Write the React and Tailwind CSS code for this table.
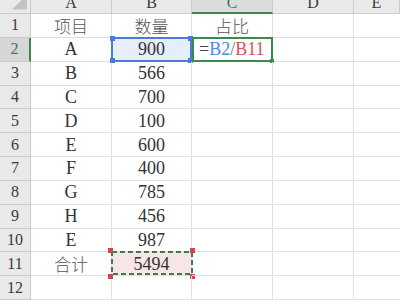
import React from "react";

const serif = "font-['Liberation_Serif','Noto_Sans_CJK_SC',serif]";

const rows = [
  ["项目", "数量", "占比"],
  ["A", "900", "F"],
  ["B", "566", ""],
  ["C", "700", ""],
  ["D", "100", ""],
  ["E", "600", ""],
  ["F", "400", ""],
  ["G", "785", ""],
  ["H", "456", ""],
  ["E", "987", ""],
  ["合计", "5494", ""],
  ["", "", ""],
];

const cols = ["A", "B", "C", "D", "E"];

function isCJK(s) {
  return /[\u4e00-\u9fff]/.test(s);
}

function CellText({ text }) {
  if (!text) return null;
  if (isCJK(text)) {
    return (
      <span className="font-['Noto_Sans_CJK_SC',sans-serif] font-light text-[17px] leading-none text-[#555]">
        {text}
      </span>
    );
  }
  return <span className={`${serif} text-[18px] leading-none text-[#333]`}>{text}</span>;
}

function Handle({ pos, color }) {
  const map = {
    tl: "-left-[3px] -top-[3px]",
    tr: "-right-[3px] -top-[3px]",
    bl: "-left-[3px] -bottom-[3px]",
    br: "-right-[3px] -bottom-[3px]",
  };
  return <div className={`absolute w-[5px] h-[5px] ${map[pos]} ${color}`} />;
}

export default function App() {
  return (
    <div className="w-[400px] h-[300px] overflow-hidden bg-white">
      <div className="grid grid-cols-[31px_81px_80px_81px_81px_1fr] grid-rows-[14px_repeat(12,23.85px)] w-[400px]">
        {/* corner */}
        <div className="relative bg-[#e9e9e9] border-r border-b border-[#cbcbcb] overflow-hidden">
          <svg width="31" height="14" className="absolute left-0 top-0">
            <polygon points="12,9.5 27,9.5 27,-5" fill="#c3c3c3" />
          </svg>
        </div>
        {cols.map((c) => (
          <div
            key={c}
            className={`relative flex justify-center overflow-hidden border-r border-[#cbcbcb] ${
              c === "C" ? "bg-[#dcdcdc] border-b-2 border-b-[#3a8a4e]" : "bg-[#e9e9e9] border-b"
            }`}
          >
            <span
              className={`${serif} text-[16px] leading-none -mt-[5px] ${
                c === "C" ? "text-[#3d7a52]" : "text-[#3a3a3a]"
              }`}
            >
              {c}
            </span>
          </div>
        ))}
        {rows.map((r, i) => {
          const n = i + 1;
          return (
            <React.Fragment key={n}>
              <div
                className={`flex items-center justify-center border-b border-[#cbcbcb] ${
                  n === 2
                    ? "bg-[#d6d6d6] border-r-2 border-r-[#3a8a4e]"
                    : "bg-[#e9e9e9] border-r"
                }`}
              >
                <span
                  className={`${serif} text-[16px] leading-none ${
                    n === 2 ? "text-[#3d7a52]" : "text-[#3a3a3a]"
                  }`}
                >
                  {n}
                </span>
              </div>
              {/* A */}
              <div className="flex items-center justify-center border-r border-b border-[#e0e0e0]">
                <CellText text={r[0]} />
              </div>
              {/* B */}
              <div
                className={`relative flex items-center justify-center border-r border-b border-[#e0e0e0] ${
                  n === 2 ? "bg-[#e6eefa]" : n === 11 ? "bg-[#f8e6e6]" : ""
                }`}
              >
                <CellText text={r[1]} />
                {n === 2 && (
                  <div className="absolute -left-px -top-px -right-px -bottom-px border-2 border-[#4a7bd6]">
                    <Handle pos="tl" color="bg-[#4a7bd6]" />
                    <Handle pos="tr" color="bg-[#4a7bd6]" />
                    <Handle pos="bl" color="bg-[#4a7bd6]" />
                    <Handle pos="br" color="bg-[#4a7bd6]" />
                  </div>
                )}
                {n === 11 && (
                  <div className="absolute -left-px -top-px -right-px -bottom-px">
                    <svg className="absolute inset-0 w-full h-full overflow-visible">
                      <rect
                        x="1"
                        y="1"
                        width="80"
                        height="22"
                        fill="none"
                        stroke="#3a7d4c"
                        strokeWidth="2"
                        strokeDasharray="5 3"
                      />
                    </svg>
                    <Handle pos="tl" color="bg-[#d2464f]" />
                    <Handle pos="tr" color="bg-[#d2464f]" />
                    <Handle pos="bl" color="bg-[#d2464f]" />
                    <Handle pos="br" color="bg-[#d2464f]" />
                  </div>
                )}
              </div>
              {/* C */}
              <div className="relative flex items-center justify-center border-r border-b border-[#e0e0e0]">
                {n === 2 ? (
                  <>
                    <div className="absolute left-[7px] top-0 bottom-0 flex items-center">
                      <span className={`${serif} text-[18px] leading-none whitespace-pre`}>
                        <span className="text-[#444]">=</span>
                        <span className="text-[#4f87e3]">B2</span>
                        <span className="text-[#7a7a7a]">/</span>
                        <span className="text-[#dc4f5a]">B11</span>
                      </span>
                    </div>
                    <div className="absolute left-0 -top-px -right-px -bottom-px border-2 border-[#3a8a4e]">
                      <div className="absolute -right-[3px] -bottom-[3px] w-[4px] h-[4px] bg-[#3a8a4e]" />
                    </div>
                  </>
                ) : (
                  <CellText text={r[2]} />
                )}
              </div>
              {/* D */}
              <div className="border-r border-b border-[#e0e0e0]" />
              {/* E */}
              <div className="border-b border-[#e0e0e0]" />
            </React.Fragment>
          );
        })}
      </div>
    </div>
  );
}
